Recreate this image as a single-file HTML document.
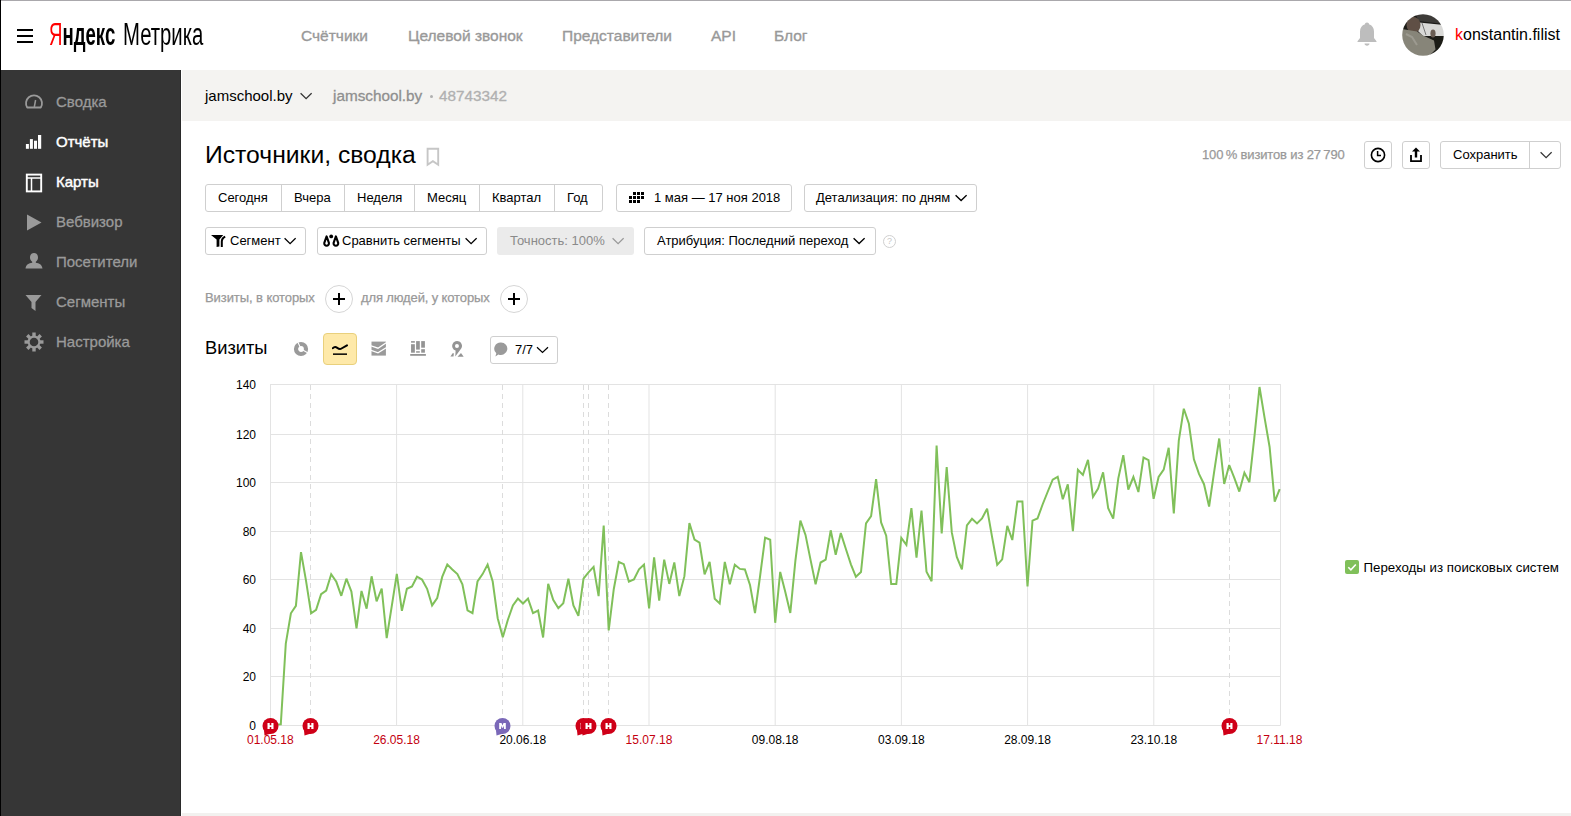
<!DOCTYPE html>
<html><head><meta charset="utf-8">
<style>
*{box-sizing:border-box;margin:0;padding:0}
html,body{width:1571px;height:816px;overflow:hidden;background:#fff;font-family:"Liberation Sans",sans-serif;color:#000}
.a{position:absolute}
.t{position:absolute;white-space:nowrap;line-height:1}
#topline{left:0;top:0;width:1571px;height:1px;background:#aaa8ac}
#leftline{left:0;top:0;width:1px;height:816px;background:#000;z-index:5}
#side{left:0;top:70px;width:181px;height:746px;background:#363636;border-right:1px solid #2a2a2a}
#graybar{left:182px;top:70px;width:1389px;height:51px;background:#f4f3f1}
#bottombar{left:182px;top:813px;width:1389px;height:3px;background:#f2f1ef}
.nav{font-size:15.5px;color:#999;-webkit-text-stroke:0.35px #999}
.side{font-size:15px;color:#9a9a9a;-webkit-text-stroke:0.3px #9a9a9a}
.side.w{color:#fff;-webkit-text-stroke:0.45px #fff}
.btn{position:absolute;border:1px solid #cfcfcf;border-radius:3px;background:#fff;font-size:13px;line-height:25px;white-space:nowrap}
.seg{position:absolute;top:0;height:25px;border-left:1px solid #cfcfcf}
.chev{position:absolute}
</style></head><body>
<div id="topline" class="a"></div>
<div id="leftline" class="a"></div>

<!-- header -->
<div class="a" style="left:17px;top:29px;width:16px;height:2px;background:#000"></div>
<div class="a" style="left:17px;top:35px;width:16px;height:2px;background:#000"></div>
<div class="a" style="left:17px;top:41px;width:16px;height:2px;background:#000"></div>
<div class="t" style="left:49px;top:19px;font-size:31px;transform:scaleX(0.6);transform-origin:0 0"><span style="color:#f00">Я</span><span style="font-weight:bold">ндекс</span></div>
<div class="t" style="left:123px;top:19px;font-size:31px;transform:scaleX(0.655);transform-origin:0 0">Метрика</div>

<div class="t nav" style="left:301px;top:28px">Счётчики</div>
<div class="t nav" style="left:408px;top:28px">Целевой звонок</div>
<div class="t nav" style="left:562px;top:28px">Представители</div>
<div class="t nav" style="left:711px;top:28px">API</div>
<div class="t nav" style="left:774px;top:28px">Блог</div>

<!-- bell -->
<svg class="a" style="left:1356px;top:21px" width="22" height="26" viewBox="0 0 22 26"><path d="M11 1.5c1.3 0 2 .8 2 1.7 3.2.9 5 3.7 5 7.3v6.5l2.5 3.2v.8H1.5v-.8L4 17V10.5c0-3.6 1.8-6.4 5-7.3 0-.9.7-1.7 2-1.7z" fill="#bdbdbd"/><path d="M8.5 22.5h5c0 1.3-1.1 2.2-2.5 2.2s-2.5-.9-2.5-2.2z" fill="#bdbdbd"/></svg>
<!-- avatar -->
<svg class="a" style="left:1402px;top:14px" width="42" height="42" viewBox="0 0 42 42"><defs><clipPath id="av"><circle cx="21" cy="21" r="20.8"/></clipPath><filter id="bl"><feGaussianBlur stdDeviation="0.5"/></filter></defs>
<g clip-path="url(#av)"><g filter="url(#bl)"><rect width="42" height="42" fill="#1c1b19"/>
<path d="M14 0H42V10L16 7z" fill="#3c3b38"/>
<path d="M17 8.5L42 11v11H21l-5-5z" fill="#d9d9d7"/>
<path d="M20 9l4 12" stroke="#777" stroke-width="1"/>
<ellipse cx="11.5" cy="11" rx="7" ry="8" fill="#5e5044"/>
<path d="M0 15l15 2.5 6 4 11 5 1.5 9-7 7H0z" fill="#878579"/>
<path d="M4 20l6 3 5 8" stroke="#9c9a90" stroke-width="2" fill="none"/>
<ellipse cx="31" cy="19.5" rx="2.6" ry="4" fill="#6b5d52"/>
</g></g></svg>
<div class="t" style="left:1455px;top:27px;font-size:16px;color:#000"><span style="color:#f00">k</span>onstantin.filist</div>

<!-- sidebar -->
<div id="side" class="a"></div>
<div id="graybar" class="a"></div>
<div id="bottombar" class="a"></div>

<div class="t side" style="left:56px;top:93.8px">Сводка</div>
<div class="t side w" style="left:56px;top:133.8px">Отчёты</div>
<div class="t side w" style="left:56px;top:173.8px">Карты</div>
<div class="t side" style="left:56px;top:213.8px">Вебвизор</div>
<div class="t side" style="left:56px;top:253.8px">Посетители</div>
<div class="t side" style="left:56px;top:293.8px">Сегменты</div>
<div class="t side" style="left:56px;top:333.8px">Настройка</div>

<!-- gray bar -->
<div class="t" style="left:205px;top:88px;font-size:15px;color:#000">jamschool.by</div>
<svg class="a" style="left:300px;top:92px" width="12" height="8" viewBox="0 0 12 8"><path d="M0.6 1.2l5.5 5.4 5.5-5.4" stroke="#333" stroke-width="1.3" fill="none"/></svg>
<div class="t" style="left:333px;top:88px;font-size:15.3px;color:#8f8f8f;-webkit-text-stroke:0.3px #8f8f8f">jamschool.by</div>
<div class="a" style="left:430px;top:95px;width:3px;height:3px;border-radius:50%;background:#b0b0b0"></div>
<div class="t" style="left:439px;top:88px;font-size:15.3px;color:#b0b0b0;-webkit-text-stroke:0.3px #b0b0b0">48743342</div>

<!-- title -->
<div class="t" style="left:205px;top:142.5px;font-size:24.7px;color:#000">Источники, сводка</div>


<div class="a" style="left:427px;top:147px;width:0;height:0"></div>
<svg class="a" style="left:426px;top:147px" width="14" height="20" viewBox="0 0 14 20"><path d="M1.6 1.8h10.6v16l-5.3-3.6-5.3 3.6z" fill="none" stroke="#c6c6c6" stroke-width="1.9"/></svg>

<div class="t" style="left:1202px;top:148px;font-size:13px;color:#999;letter-spacing:-0.15px;-webkit-text-stroke:0.25px #999">100&#8201;% визитов из 27&#8201;790</div>
<div class="btn" style="left:1364px;top:141px;width:28px;height:28px"></div>
<svg class="a" style="left:1370px;top:147px" width="16" height="16" viewBox="0 0 16 16"><circle cx="8" cy="8" r="6.6" fill="none" stroke="#000" stroke-width="1.6"/><path d="M7.6 4v4.4h3.4" fill="none" stroke="#000" stroke-width="1.5"/></svg>
<div class="btn" style="left:1402px;top:141px;width:28px;height:28px"></div>
<svg class="a" style="left:1408px;top:146px" width="16" height="17" viewBox="0 0 16 17"><path d="M8 1.5l-4 4h2.8v6h2.4v-6H12z" fill="#000"/><path d="M3 9v6.2h10V9" fill="none" stroke="#000" stroke-width="1.8"/></svg>
<div class="btn" style="left:1440px;top:141px;width:121px;height:28px"><div class="seg" style="left:88px;height:26px"></div></div>
<div class="t" style="left:1453px;top:148px;font-size:13px">Сохранить</div>
<svg class="a" style="left:1540px;top:151px" width="12" height="8" viewBox="0 0 12 8"><path d="M0.6 1.2l5.5 5.4 5.5-5.4" stroke="#333" stroke-width="1.2" fill="none"/></svg>

<!-- period group -->
<div class="btn" style="left:205px;top:184px;width:398px;height:28px">
 <div class="seg" style="left:75px;height:26px"></div><div class="seg" style="left:138px;height:26px"></div><div class="seg" style="left:208px;height:26px"></div><div class="seg" style="left:273px;height:26px"></div><div class="seg" style="left:348px;height:26px"></div>
</div>
<div class="t" style="left:218px;top:191px;font-size:13px">Сегодня</div>
<div class="t" style="left:294px;top:191px;font-size:13px">Вчера</div>
<div class="t" style="left:357px;top:191px;font-size:13px">Неделя</div>
<div class="t" style="left:427px;top:191px;font-size:13px">Месяц</div>
<div class="t" style="left:492px;top:191px;font-size:13px">Квартал</div>
<div class="t" style="left:567px;top:191px;font-size:13px">Год</div>

<div class="btn" style="left:616px;top:184px;width:176px;height:28px"></div>
<svg class="a" style="left:629px;top:192px" width="15" height="11" viewBox="0 0 15 11"><g fill="#000"><rect x="4" y="0" width="3" height="3"/><rect x="8" y="0" width="3" height="3"/><rect x="12" y="0" width="3" height="3"/><rect x="0" y="4" width="3" height="3"/><rect x="4" y="4" width="3" height="3"/><rect x="8" y="4" width="3" height="3"/><rect x="12" y="4" width="3" height="3"/><rect x="0" y="8" width="3" height="3"/><rect x="4" y="8" width="3" height="3"/><rect x="8" y="8" width="3" height="3"/></g></svg>
<div class="t" style="left:654px;top:191px;font-size:13px">1 мая — 17 ноя 2018</div>

<div class="btn" style="left:804px;top:184px;width:173px;height:28px"></div>
<div class="t" style="left:816px;top:191px;font-size:13px">Детализация: по дням</div>
<svg class="a" style="left:955px;top:194px" width="12" height="8" viewBox="0 0 12 8"><path d="M0.6 1.2l5.5 5.4 5.5-5.4" stroke="#000" stroke-width="1.4" fill="none"/></svg>

<!-- row 2 -->
<div class="btn" style="left:205px;top:227px;width:101px;height:28px"></div>
<svg class="a" style="left:211px;top:234px" width="15" height="14" viewBox="0 0 15 14"><path d="M0 1h12.2L8.4 5.6v6.8L5.6 13V5.6z" fill="#000"/><path d="M13.8 1.8c-2.6 1.2-4 3.2-4 5.6V13h2V7.6c0-1.8 1-3.3 2.8-4.2z" fill="#000"/></svg>
<div class="t" style="left:230px;top:234px;font-size:13px">Сегмент</div>
<svg class="a" style="left:284px;top:237px" width="12" height="8" viewBox="0 0 12 8"><path d="M0.6 1.2l5.5 5.4 5.5-5.4" stroke="#000" stroke-width="1.3" fill="none"/></svg>

<div class="btn" style="left:317px;top:227px;width:170px;height:28px"></div>
<svg class="a" style="left:322px;top:234px" width="18" height="14" viewBox="0 0 18 14"><path d="M4.6 2.4L6.9 8.9a2.35 2.35 0 1 1-4.6 0z" fill="none" stroke="#000" stroke-width="2.1" stroke-linejoin="round"/><path d="M13.9 2.4L16.2 8.9a2.35 2.35 0 1 1-4.6 0z" fill="none" stroke="#000" stroke-width="2.1" stroke-linejoin="round"/><circle cx="9.2" cy="2.4" r="1.9" fill="#000"/></svg>
<div class="t" style="left:342px;top:234px;font-size:13px">Сравнить сегменты</div>
<svg class="a" style="left:465px;top:237px" width="12" height="8" viewBox="0 0 12 8"><path d="M0.6 1.2l5.5 5.4 5.5-5.4" stroke="#000" stroke-width="1.3" fill="none"/></svg>

<div class="a" style="left:497px;top:227px;width:137px;height:28px;background:#ebebeb;border-radius:3px"></div>
<div class="t" style="left:510px;top:233.5px;font-size:13px;color:#8a8a8a">Точность: 100%</div>
<svg class="a" style="left:612px;top:237px" width="12" height="8" viewBox="0 0 12 8"><path d="M0.6 1.2l5.5 5.4 5.5-5.4" stroke="#999" stroke-width="1.2" fill="none"/></svg>

<div class="btn" style="left:644px;top:227px;width:232px;height:28px"></div>
<div class="t" style="left:657px;top:234px;font-size:13px">Атрибуция: Последний переход</div>
<svg class="a" style="left:853px;top:237px" width="12" height="8" viewBox="0 0 12 8"><path d="M0.6 1.2l5.5 5.4 5.5-5.4" stroke="#000" stroke-width="1.4" fill="none"/></svg>
<div class="a" style="left:883px;top:235px;width:13px;height:13px;border:1px solid #d0d0d0;border-radius:50%;font-size:9px;color:#c8c8c8;text-align:center;line-height:11px">?</div>

<!-- filter row -->
<div class="t" style="left:205px;top:291px;font-size:13px;color:#999;letter-spacing:-0.08px;-webkit-text-stroke:0.25px #999">Визиты, в которых</div>
<div class="a" style="left:325px;top:285px;width:28px;height:28px;border:1px solid #d6d6d6;border-radius:50%"></div>
<div class="a" style="left:333px;top:298.3px;width:12px;height:1.6px;background:#000"></div>
<div class="a" style="left:338.2px;top:293px;width:1.6px;height:12px;background:#000"></div>
<div class="t" style="left:361px;top:291px;font-size:13px;color:#999;letter-spacing:-0.13px;-webkit-text-stroke:0.25px #999">для людей, у которых</div>
<div class="a" style="left:500px;top:285px;width:28px;height:28px;border:1px solid #d6d6d6;border-radius:50%"></div>
<div class="a" style="left:508px;top:298.3px;width:12px;height:1.6px;background:#000"></div>
<div class="a" style="left:513.2px;top:293px;width:1.6px;height:12px;background:#000"></div>

<!-- chart header -->
<div class="t" style="left:205px;top:339px;font-size:18.3px">Визиты</div>


<!-- sidebar icons -->
<svg class="a" style="left:24px;top:92px" width="20" height="18" viewBox="0 0 20 18"><path d="M3.2 15.5A8 8 0 1 1 16.8 15.5z" fill="none" stroke="#9a9a9a" stroke-width="1.8" stroke-linejoin="round"/><path d="M10.3 15l1.3-7" stroke="#9a9a9a" stroke-width="1.5"/></svg>
<svg class="a" style="left:25px;top:134px" width="18" height="16" viewBox="0 0 18 16"><g fill="#fff"><rect x="0.9" y="10" width="3" height="4.8"/><rect x="4.9" y="5.1" width="3" height="9.7"/><rect x="9" y="6.7" width="3" height="8.1"/><rect x="13" y="1" width="3.2" height="13.8"/></g></svg>
<svg class="a" style="left:25px;top:173px" width="18" height="20" viewBox="0 0 18 20"><rect x="1.8" y="1.6" width="14.4" height="16.8" fill="none" stroke="#fff" stroke-width="1.9"/><path d="M1.8 5h14.4M6.5 5v13.4" stroke="#fff" stroke-width="1.5"/></svg>
<svg class="a" style="left:26px;top:214px" width="16" height="17" viewBox="0 0 16 17"><path d="M1 0.5L15.5 8.5 1 16.5z" fill="#9a9a9a"/></svg>
<svg class="a" style="left:25px;top:252px" width="18" height="18" viewBox="0 0 18 18"><path d="M9 1c2.6 0 4 2 4 4.5 0 2-1 3.6-2.2 4.2v1c3.3.6 6.2 1.8 6.7 5.8H0.5c.5-4 3.4-5.2 6.7-5.8v-1C6 9.1 5 7.5 5 5.5 5 3 6.4 1 9 1z" fill="#9a9a9a"/></svg>
<svg class="a" style="left:25px;top:294px" width="17" height="18" viewBox="0 0 17 18"><path d="M0.5 1h16l-6 7v9l-4-3V8z" fill="#9a9a9a"/></svg>
<svg class="a" style="left:24px;top:332px" width="20" height="20" viewBox="0 0 20 20"><g fill="#9a9a9a"><circle cx="10" cy="10" r="6.5"/><rect x="8.3" y="0.5" width="3.4" height="4"/><rect x="8.3" y="15.5" width="3.4" height="4"/><rect x="0.5" y="8.3" width="4" height="3.4"/><rect x="15.5" y="8.3" width="4" height="3.4"/><rect x="8.3" y="0.5" width="3.4" height="4" transform="rotate(45 10 10)"/><rect x="8.3" y="15.5" width="3.4" height="4" transform="rotate(45 10 10)"/><rect x="0.5" y="8.3" width="4" height="3.4" transform="rotate(45 10 10)"/><rect x="15.5" y="8.3" width="4" height="3.4" transform="rotate(45 10 10)"/></g><circle cx="10" cy="10" r="4.3" fill="#363636"/></svg>

<!-- chart type icons -->
<svg class="a" style="left:293px;top:341px" width="16" height="16" viewBox="0 0 16 16"><circle cx="8" cy="8" r="5" fill="none" stroke="#9a9a9a" stroke-width="4.2"/><path d="M8 8L4.6 0.5M8 8L15.5 12.2" stroke="#fff" stroke-width="1.1"/></svg>
<div class="a" style="left:323px;top:333px;width:34px;height:32px;background:#fee9a9;border:1px solid #e9d07c;border-radius:4px"></div>
<svg class="a" style="left:332px;top:344px" width="16" height="13" viewBox="0 0 16 13"><path d="M0.9 4.2c1.6-1.8 3-1.3 4.4-0.3s2.6 1.6 4.2 0.6L15 1.4" fill="none" stroke="#000" stroke-width="2" stroke-linecap="round"/><rect x="1" y="9.4" width="14" height="1.5" fill="#000"/></svg>
<svg class="a" style="left:371px;top:341px" width="16" height="16" viewBox="0 0 16 16"><rect x="0.5" y="0.6" width="14.4" height="14" fill="#9a9a9a"/><path d="M0 4.8L7 7.2 15.2 1.8M0 9.3L7 11.9 15.2 6.8" fill="none" stroke="#fff" stroke-width="1.3"/></svg>
<svg class="a" style="left:410px;top:340px" width="17" height="17" viewBox="0 0 17 17"><g fill="#949494"><rect x="1.05" y="1.1" width="3.8" height="1.6"/><rect x="1.05" y="4.2" width="3.8" height="8.5"/><rect x="6.1" y="1.1" width="3.7" height="8.5"/><rect x="6.1" y="11.2" width="3.7" height="1.5"/><rect x="11.2" y="1.1" width="3.7" height="6.6"/><rect x="11.2" y="9.2" width="3.7" height="3.5"/><rect x="0.2" y="14" width="15.7" height="1.8"/></g></svg>
<svg class="a" style="left:449px;top:340px" width="17" height="18" viewBox="0 0 17 18"><g fill="#949494"><path d="M6.3 16.5L6.6 10.6A4.9 4.9 0 1 1 12.2 8.6z"/><path d="M1.4 16.5L3.6 13.2h1.3L4.5 16.5z"/><path d="M8.5 16.7L12 12.9 14.7 16.7z"/></g><circle cx="7.95" cy="6" r="2" fill="#fff"/></svg>

<div class="btn" style="left:490px;top:336px;width:68px;height:28px"></div>
<svg class="a" style="left:494px;top:342px" width="14" height="16" viewBox="0 0 14 16"><path d="M7 0.5a6.4 6.2 0 1 1-2.6 11.9L1.4 14.6 2.3 11.2A6.4 6.2 0 0 1 7 0.5z" fill="#9a9a9a"/></svg>
<div class="t" style="left:515px;top:343px;font-size:13px">7/7</div>
<svg class="a" style="left:536px;top:346px" width="13" height="8" viewBox="0 0 13 8"><path d="M1 1.2l5.5 5.3 5.5-5.3" stroke="#000" stroke-width="1.2" fill="none"/></svg>

<!-- legend -->
<div class="a" style="left:1345px;top:560px;width:14px;height:14px;background:#80c05a;border-radius:2px"></div>
<svg class="a" style="left:1345px;top:560px" width="14" height="14" viewBox="0 0 14 14"><path d="M3.3 7.2l2.6 2.6 4.9-5.3" fill="none" stroke="#fff" stroke-width="1.6"/></svg>
<div class="t" style="left:1363.5px;top:561px;font-size:13.3px">Переходы из поисковых систем</div>

<svg class="a" style="left:0;top:0" width="1571" height="816" viewBox="0 0 1571 816">
<line x1="270.5" x2="1280.5" y1="725.5" y2="725.5" stroke="#e3e3e3" stroke-width="1"/>
<line x1="270.5" x2="1280.5" y1="676.5" y2="676.5" stroke="#e3e3e3" stroke-width="1"/>
<line x1="270.5" x2="1280.5" y1="628.5" y2="628.5" stroke="#e3e3e3" stroke-width="1"/>
<line x1="270.5" x2="1280.5" y1="579.5" y2="579.5" stroke="#e3e3e3" stroke-width="1"/>
<line x1="270.5" x2="1280.5" y1="531.5" y2="531.5" stroke="#e3e3e3" stroke-width="1"/>
<line x1="270.5" x2="1280.5" y1="482.5" y2="482.5" stroke="#e3e3e3" stroke-width="1"/>
<line x1="270.5" x2="1280.5" y1="434.5" y2="434.5" stroke="#e3e3e3" stroke-width="1"/>
<line x1="270.5" x2="1280.5" y1="384.5" y2="384.5" stroke="#e3e3e3" stroke-width="1"/>
<line x1="270.50" x2="270.50" y1="384" y2="725.5" stroke="#e3e3e3" stroke-width="1"/>
<line x1="396.60" x2="396.60" y1="384" y2="725.5" stroke="#e3e3e3" stroke-width="1"/>
<line x1="522.80" x2="522.80" y1="384" y2="725.5" stroke="#e3e3e3" stroke-width="1"/>
<line x1="649.00" x2="649.00" y1="384" y2="725.5" stroke="#e3e3e3" stroke-width="1"/>
<line x1="775.20" x2="775.20" y1="384" y2="725.5" stroke="#e3e3e3" stroke-width="1"/>
<line x1="901.40" x2="901.40" y1="384" y2="725.5" stroke="#e3e3e3" stroke-width="1"/>
<line x1="1027.60" x2="1027.60" y1="384" y2="725.5" stroke="#e3e3e3" stroke-width="1"/>
<line x1="1153.80" x2="1153.80" y1="384" y2="725.5" stroke="#e3e3e3" stroke-width="1"/>
<line x1="1280.50" x2="1280.50" y1="384" y2="725.5" stroke="#e3e3e3" stroke-width="1"/>
<line x1="310.5" x2="310.5" y1="385" y2="718" stroke="#dcdcdc" stroke-width="1" stroke-dasharray="5,4"/>
<line x1="502.5" x2="502.5" y1="385" y2="718" stroke="#dcdcdc" stroke-width="1" stroke-dasharray="5,4"/>
<line x1="583.5" x2="583.5" y1="385" y2="718" stroke="#dcdcdc" stroke-width="1" stroke-dasharray="5,4"/>
<line x1="588.5" x2="588.5" y1="385" y2="718" stroke="#dcdcdc" stroke-width="1" stroke-dasharray="5,4"/>
<line x1="608.5" x2="608.5" y1="385" y2="718" stroke="#dcdcdc" stroke-width="1" stroke-dasharray="5,4"/>
<line x1="1229.5" x2="1229.5" y1="385" y2="718" stroke="#dcdcdc" stroke-width="1" stroke-dasharray="5,4"/>
<polyline points="270.7,724.5 275.7,724.5 280.8,724.2 285.8,643.5 290.9,613.3 295.9,605.8 301.0,552.1 306.0,580.7 311.1,613.3 316.1,609.8 321.1,594.2 326.2,590.6 331.2,574.2 336.3,581.8 341.3,595.8 346.4,578.7 351.4,591.6 356.5,628.3 361.5,591.0 366.6,608.7 371.6,576.3 376.6,601.3 381.7,588.5 386.7,638.1 391.8,605.9 396.8,573.8 401.9,610.9 406.9,588.8 412.0,586.5 417.0,576.7 422.0,579.6 427.1,588.8 432.1,605.4 437.2,598.0 442.2,576.9 447.3,564.6 452.3,569.5 457.4,574.1 462.4,584.2 467.5,610.3 472.5,613.1 477.5,581.5 482.6,574.1 487.6,564.6 492.7,581.5 497.7,618.2 502.8,637.2 507.8,620.0 512.9,605.4 517.9,598.6 523.0,603.5 528.0,598.6 533.0,613.1 538.1,610.5 543.1,637.5 548.2,583.9 553.2,599.9 558.3,608.1 563.3,603.2 568.4,578.7 573.4,605.4 578.4,615.8 583.5,578.7 588.5,572.3 593.6,566.9 598.6,596.1 603.7,525.6 608.7,630.4 613.8,589.0 618.8,562.0 623.8,564.2 628.9,581.7 633.9,579.5 639.0,569.4 644.0,564.6 649.1,608.3 654.1,557.4 659.2,600.6 664.2,559.6 669.3,583.9 674.3,562.4 679.3,596.0 684.4,576.2 689.4,523.1 694.5,539.5 699.5,542.6 704.6,574.4 709.6,561.9 714.7,598.7 719.7,603.5 724.8,561.9 729.8,584.2 734.8,564.7 739.9,568.9 744.9,569.5 750.0,584.9 755.0,613.0 760.1,576.0 765.1,537.7 770.2,539.8 775.2,622.8 780.2,571.9 785.3,592.0 790.3,613.0 795.4,560.7 800.4,520.6 805.5,534.9 810.5,559.6 815.6,584.2 820.6,562.5 825.7,559.7 830.7,530.3 835.7,554.8 840.8,533.1 845.8,548.7 850.9,564.3 855.9,576.8 861.0,572.0 866.0,523.4 871.1,516.1 876.1,479.2 881.1,522.4 886.2,535.7 891.2,584.1 896.3,584.1 901.3,538.0 906.4,544.9 911.4,508.2 916.5,557.6 921.5,510.6 926.5,571.8 931.6,581.2 936.6,445.5 941.7,533.5 946.7,467.1 951.8,532.4 956.8,557.0 961.9,569.4 966.9,525.3 972.0,518.8 977.0,523.4 982.0,518.5 987.1,508.7 992.1,537.2 997.2,564.8 1002.2,559.3 1007.3,525.8 1012.3,540.0 1017.4,501.4 1022.4,501.4 1027.5,586.5 1032.5,520.7 1037.5,518.5 1042.6,504.5 1047.6,492.0 1052.7,479.7 1057.7,476.9 1062.8,499.2 1067.8,484.3 1072.9,531.1 1077.9,469.7 1082.9,474.9 1088.0,459.8 1093.0,496.8 1098.1,488.6 1103.1,472.3 1108.2,508.3 1113.2,518.6 1118.3,478.3 1123.3,455.2 1128.3,489.5 1133.4,477.0 1138.4,492.0 1143.5,457.6 1148.5,460.2 1153.6,498.8 1158.6,477.0 1163.7,469.6 1168.7,447.8 1173.8,513.4 1178.8,440.5 1183.8,408.7 1188.9,423.8 1193.9,459.3 1199.0,473.9 1204.0,484.2 1209.1,506.5 1214.1,472.2 1219.2,438.5 1224.2,484.0 1229.2,465.0 1234.3,477.9 1239.3,491.6 1244.4,472.8 1249.4,482.2 1254.5,435.9 1259.5,387.0 1264.6,417.9 1269.6,447.0 1274.7,501.6 1279.7,489.1" fill="none" stroke="#80c05a" stroke-width="2" stroke-linejoin="miter" stroke-miterlimit="3"/>
<path d="M264.0,730.0 L264.5,735.5 L271.0,733.5z" fill="#cf0018"/>
<circle cx="270.5" cy="726" r="8" fill="#cf0018"/>
<path d="M267.5,723h2.2v2.3h1.6v-2.3h2.2v6h-2.2v-2.1h-1.6v2.1h-2.2z" fill="#fff"/>
<path d="M304.0,730.0 L304.5,735.5 L311.0,733.5z" fill="#cf0018"/>
<circle cx="310.5" cy="726" r="8" fill="#cf0018"/>
<path d="M307.5,723h2.2v2.3h1.6v-2.3h2.2v6h-2.2v-2.1h-1.6v2.1h-2.2z" fill="#fff"/>
<path d="M496.0,730.0 L496.5,735.5 L503.0,733.5z" fill="#7a68b8"/>
<circle cx="502.5" cy="726" r="8" fill="#7a68b8"/>
<path d="M499.2,723h2.3l1,2.6 1,-2.6h2.3v6h-1.8v-3.6l-0.9,2.4h-1.2l-0.9,-2.4v3.6h-1.8z" fill="#fff"/>
<path d="M577.0,730.0 L577.5,735.5 L584.0,733.5z" fill="#cf0018"/>
<circle cx="583.5" cy="726" r="8" fill="#cf0018"/>
<path d="M580.5,723h2.2v2.3h1.6v-2.3h2.2v6h-2.2v-2.1h-1.6v2.1h-2.2z" fill="#fff"/>
<path d="M582.0,730.0 L582.5,735.5 L589.0,733.5z" fill="#cf0018"/>
<circle cx="588.5" cy="726" r="8" fill="#cf0018"/>
<path d="M585.5,723h2.2v2.3h1.6v-2.3h2.2v6h-2.2v-2.1h-1.6v2.1h-2.2z" fill="#fff"/>
<path d="M602.0,730.0 L602.5,735.5 L609.0,733.5z" fill="#cf0018"/>
<circle cx="608.5" cy="726" r="8" fill="#cf0018"/>
<path d="M605.5,723h2.2v2.3h1.6v-2.3h2.2v6h-2.2v-2.1h-1.6v2.1h-2.2z" fill="#fff"/>
<path d="M1223.0,730.0 L1223.5,735.5 L1230.0,733.5z" fill="#cf0018"/>
<circle cx="1229.5" cy="726" r="8" fill="#cf0018"/>
<path d="M1226.5,723h2.2v2.3h1.6v-2.3h2.2v6h-2.2v-2.1h-1.6v2.1h-2.2z" fill="#fff"/>
</svg>
<div class="t" style="right:1315px;top:720.2px;font-size:12px;text-align:right">0</div>
<div class="t" style="right:1315px;top:671.2px;font-size:12px;text-align:right">20</div>
<div class="t" style="right:1315px;top:623.2px;font-size:12px;text-align:right">40</div>
<div class="t" style="right:1315px;top:574.2px;font-size:12px;text-align:right">60</div>
<div class="t" style="right:1315px;top:526.2px;font-size:12px;text-align:right">80</div>
<div class="t" style="right:1315px;top:477.2px;font-size:12px;text-align:right">100</div>
<div class="t" style="right:1315px;top:429.2px;font-size:12px;text-align:right">120</div>
<div class="t" style="right:1315px;top:379.2px;font-size:12px;text-align:right">140</div>
<div class="t" style="left:247.0px;top:734px;font-size:12px;color:#c4000f">01.05.18</div>
<div class="t" style="left:373.2px;top:734px;font-size:12px;color:#c4000f">26.05.18</div>
<div class="t" style="left:499.4px;top:734px;font-size:12px;color:#000">20.06.18</div>
<div class="t" style="left:625.6px;top:734px;font-size:12px;color:#c4000f">15.07.18</div>
<div class="t" style="left:751.8px;top:734px;font-size:12px;color:#000">09.08.18</div>
<div class="t" style="left:878.0px;top:734px;font-size:12px;color:#000">03.09.18</div>
<div class="t" style="left:1004.2px;top:734px;font-size:12px;color:#000">28.09.18</div>
<div class="t" style="left:1130.4px;top:734px;font-size:12px;color:#000">23.10.18</div>
<div class="t" style="left:1256.6px;top:734px;font-size:12px;color:#c4000f">17.11.18</div>
</body></html>
